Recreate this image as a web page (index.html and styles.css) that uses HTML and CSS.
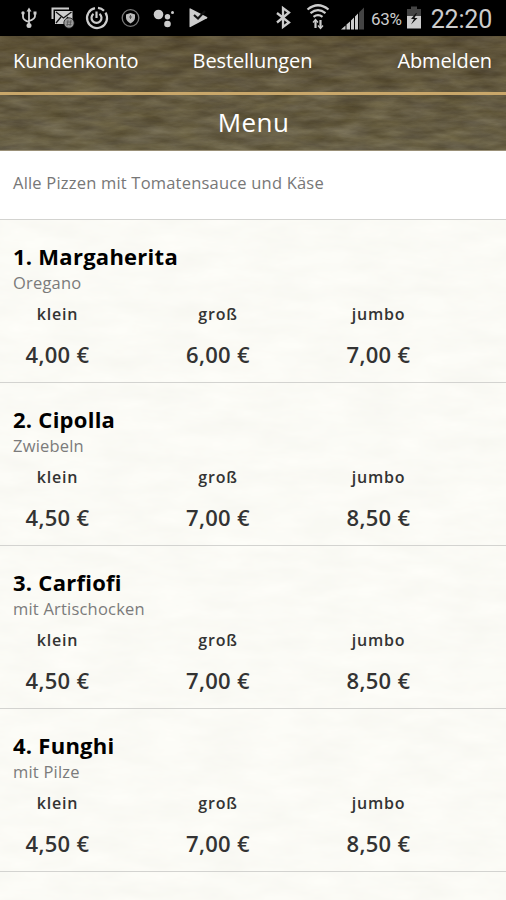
FILE: index.html
```html
<!DOCTYPE html>
<html lang="de">
<head>
<meta charset="utf-8">
<title>Menu</title>
<link rel="stylesheet" href="styles.css">
</head>
<body>
<div class="status">
  <svg class="icons" width="506" height="36" viewBox="0 0 506 36" fill="none" stroke="#ccc" stroke-width="1.4">
    <g><path d="M29 10v14M23 13v4q0 3 6 5M35 13v3q0 3-6 5" stroke-width="1.800"/><path d="M29 7.500l2.500 4h-5z" fill="#ccc" stroke="none"/><g fill="#ccc" stroke="none"><circle cx="29" cy="25.500" r="2.500"/><circle cx="23" cy="13" r="1.700"/><path d="M33.500 11.500h3v3h-3z"/></g></g>
    <g><path d="M52.500 19V8.500H69" stroke-width="2"/><path d="M55 11h17.500v13H55z" fill="#ccc" stroke="none"/><path d="M56 12l7.500 6 8-6M56 23l5-6M67 17l4 5" stroke="#111" stroke-width="1.300"/><circle cx="69" cy="23" r="5.200" fill="#999" stroke="#111" stroke-width=".8"/><path d="M66.500 22h5M66.500 24.500h5M68 20l-1 6M71 20l-1 6" stroke="#555" stroke-width=".8"/></g>
    <g stroke-width="2.200"><path d="M95 8.200a10 10 0 1 0 10.500 4.500M98 7.800a10 10 0 0 1 6 3"/><path d="M93.500 13.800a5 5 0 1 0 6 0"/><path d="M96.500 11.500v6.500"/></g>
    <g><circle cx="130.500" cy="18" r="8.300" stroke="#777" stroke-width="1.300"/><path d="M126 14.500l4.500-1.500 4.500 1.500v3c0 3-2 4.500-4.500 6-2.500-1.500-4.500-3-4.500-6z" fill="#bbb" stroke="none"/><path d="M130.500 15v4M129 17h3" stroke="#555" stroke-width="1"/></g>
    <g fill="#ccc" stroke="none"><circle cx="158.500" cy="14.500" r="4.800"/><circle cx="167.500" cy="16.800" r="2.700"/><circle cx="172.500" cy="12.500" r="1.500"/><circle cx="167.500" cy="24" r="3.300"/></g>
    <g><path d="M189.500 9q0-1 1-.500L207 17q1 .700 0 1.300L190.500 27q-1 .500-1-.500z" fill="#ccc" stroke="none"/><path d="M194 15l4 3.500 7-7.500" stroke="#111" stroke-width="2.200"/></g>
    <path d="M277 13l12 9.500-6 4.500V8l6 4.500-12 10" stroke-width="2.300"/>
    <g stroke-width="2.200"><path d="M307.500 9.500q10.500-8.500 21 0M310.500 13.200q7.500-6 15 0M313.500 16.800q4.500-3.500 9 0"/><path d="M315.500 28v-8M320.500 20v8"/><path d="M313 22.500l2.500-3 2.500 3M318 25.500l2.500 3 2.500-3" stroke-width="1.300"/></g>
    <g fill="#ccc" stroke="none"><path d="M341 29.500l4.500-4v4zM346.500 24.500l3.500-3v8h-3.500zM351 20.500l3-3v12h-3zM355 16.500l3-3v16h-3z"/><path d="M359 12.500l5-5v22h-5z" fill="#444"/></g>
    <g stroke="none"><path d="M407 9h4V6.500h6V9h4v8h-14z" fill="#444"/><path d="M407 16h14v12.500h-14z" fill="#ccc"/><path d="M416 13l-5 6h3l-3 5.500 6.500-6.500h-3l2.500-5z" fill="#111"/></g>
  </svg>
  <span class="battery">63%</span>
  <span class="clock">22:20</span>
</div>
<header class="head">
  <svg class="wood" width="506" height="115">
    <defs>
      <filter id="grain" x="0" y="0" width="100%" height="100%" color-interpolation-filters="sRGB">
        <feTurbulence type="fractalNoise" baseFrequency=".03 .12" numOctaves="5" seed="21"/>
        <feColorMatrix values=".22 .06 0 0 .26  .22 .07 0 0 .22  .18 .12 0 0 .115  0 0 0 0 1"/>
      </filter>
      <linearGradient id="shade" x1="0" y1="0" x2="0" y2="1">
        <stop offset="0" stop-color="#301b00" stop-opacity=".18"/>
        <stop offset=".5" stop-color="#301b00" stop-opacity=".06"/>
        <stop offset="1" stop-color="#85836a" stop-opacity=".1"/>
      </linearGradient>
    </defs>
    <rect width="506" height="115" filter="url(#grain)"/>
    <rect width="506" height="115" fill="url(#shade)"/>
  </svg>
  <nav class="nav"><a class="account">Kundenkonto</a><a class="orders">Bestellungen</a><a class="logout">Abmelden</a></nav>
  <h1>Menu</h1>
</header>
<p class="note">Alle Pizzen mit Tomatensauce und Käse</p>
<main class="list">
  <svg class="paper" width="506" height="681">
    <filter id="fiber" x="0" y="0" width="100%" height="100%" color-interpolation-filters="sRGB">
      <feTurbulence type="fractalNoise" baseFrequency=".02 .06" numOctaves="4" seed="3"/>
      <feColorMatrix values=".03 0 0 0 .968  .03 0 0 0 .967  .035 0 0 0 .944  0 0 0 0 1"/>
    </filter>
    <rect width="506" height="681" filter="url(#fiber)"/>
  </svg>
  <section class="item"><h2>1. Margaherita</h2><p class="desc">Oregano</p><div class="sizes"><span>klein</span><span>groß</span><span>jumbo</span></div><div class="prices"><span>4,00 €</span><span>6,00 €</span><span>7,00 €</span></div></section>
  <section class="item"><h2>2. Cipolla</h2><p class="desc">Zwiebeln</p><div class="sizes"><span>klein</span><span>groß</span><span>jumbo</span></div><div class="prices"><span>4,50 €</span><span>7,00 €</span><span>8,50 €</span></div></section>
  <section class="item"><h2>3. Carfiofi</h2><p class="desc">mit Artischocken</p><div class="sizes"><span>klein</span><span>groß</span><span>jumbo</span></div><div class="prices"><span>4,50 €</span><span>7,00 €</span><span>8,50 €</span></div></section>
  <section class="item"><h2>4. Funghi</h2><p class="desc">mit Pilze</p><div class="sizes"><span>klein</span><span>groß</span><span>jumbo</span></div><div class="prices"><span>4,50 €</span><span>7,00 €</span><span>8,50 €</span></div></section>
  <section class="item"><h2>5. Salami</h2></section>
</main>
</body>
</html>
```
FILE: styles.css
```css
* { box-sizing: border-box; }
body { margin: 0; height: 900px; overflow: hidden; background: #fbfbf8; font-family: "Open Sans", sans-serif; color: #333; }
h1, h2, p { margin: 0; font-weight: 400; }
.status { position: relative; display: flex; justify-content: flex-end; align-items: center; height: 36px; padding-right: 14px; background: #000; color: #ccc; font-family: Roboto, sans-serif; }
.icons { position: absolute; inset: 0; }
.battery { font-size: 17px; line-height: 36px; margin-right: 29px; padding-top: 2px; letter-spacing: -.3px; }
.clock { font-size: 25px; line-height: 36px; padding-top: 3px; letter-spacing: -.2px; }
.head { position: relative; height: 115px; color: #fff; border-bottom: 1px solid #9a9078; }
.wood { position: absolute; inset: 0; z-index: -1; }
.nav { display: grid; grid-template-columns: 1fr auto 1fr; height: 59px; padding: 0 14px 0 13px; border-bottom: 3px solid #c9a76a; font-size: 20px; line-height: 50px; letter-spacing: -.1px; }
.logout { text-align: right; }
h1 { padding-left: 1px; font-size: 26px; line-height: 55px; text-align: center; letter-spacing: .4px; }
.note { height: 68px; padding-left: 13px; background: #fff; color: #777; font-size: 16.500px; line-height: 64px; letter-spacing: .2px; }
.list { position: relative; height: 681px; overflow: hidden; }
.paper { position: absolute; inset: 0; z-index: -1; }
.item { height: 163px; padding: 22px 13px 0; border-top: 1px solid #d3d3d0; }
h2 { color: #000; font-size: 22px; font-weight: 700; line-height: 28px; letter-spacing: .26px; }
.desc { color: #7b7b7b; font-size: 16.500px; line-height: 26px; letter-spacing: .2px; }
.sizes, .prices { display: grid; grid-template-columns: repeat(3, 160.500px); }
.sizes span, .prices span { width: 89px; text-align: center; font-weight: 600; }
.sizes { font-size: 16px; line-height: 36px; letter-spacing: .8px; }
.prices { font-size: 22px; line-height: 44px; letter-spacing: .3px; }
```
